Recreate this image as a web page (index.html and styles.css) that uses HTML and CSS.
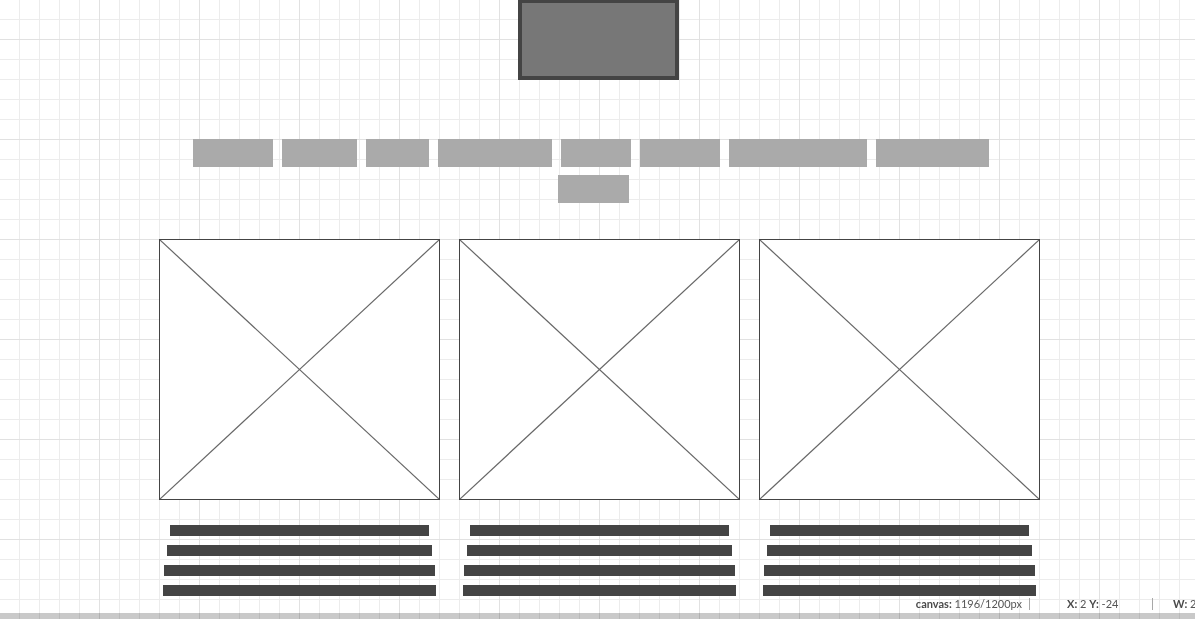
FILE: index.html
```html
<!DOCTYPE html>
<html lang="en">
<head>
<meta charset="utf-8">
<title>Wireframe</title>
<link rel="stylesheet" href="styles.css">
</head>
<body class="canvas">
  <header class="masthead">
    <div class="logo"></div>
  </header>

  <nav class="menu">
    <span class="menu-item w80"></span>
    <span class="menu-item w75"></span>
    <span class="menu-item w63"></span>
    <span class="menu-item w114"></span>
    <span class="menu-item w70"></span>
    <span class="menu-item w80"></span>
    <span class="menu-item w138"></span>
    <span class="menu-item w113"></span>
    <span class="menu-item w71 menu-item-last"></span>
  </nav>

  <main class="cards">
    <article class="card">
      <div class="thumb">
        <svg viewBox="0 0 279 259" preserveAspectRatio="none"><line x1="0" y1="0" x2="279" y2="259"/><line x1="279" y1="0" x2="0" y2="259"/></svg>
      </div>
      <div class="lines">
        <span class="line l1"></span>
        <span class="line l2"></span>
        <span class="line l3"></span>
        <span class="line l4"></span>
      </div>
    </article>
    <article class="card">
      <div class="thumb">
        <svg viewBox="0 0 279 259" preserveAspectRatio="none"><line x1="0" y1="0" x2="279" y2="259"/><line x1="279" y1="0" x2="0" y2="259"/></svg>
      </div>
      <div class="lines">
        <span class="line l1"></span>
        <span class="line l2"></span>
        <span class="line l3"></span>
        <span class="line l4"></span>
      </div>
    </article>
    <article class="card">
      <div class="thumb">
        <svg viewBox="0 0 279 259" preserveAspectRatio="none"><line x1="0" y1="0" x2="279" y2="259"/><line x1="279" y1="0" x2="0" y2="259"/></svg>
      </div>
      <div class="lines">
        <span class="line l1"></span>
        <span class="line l2"></span>
        <span class="line l3"></span>
        <span class="line l4"></span>
      </div>
    </article>
  </main>

  <footer class="status">
    <span class="seg seg-canvas"><b>canvas:</b> 1196/1200px</span>
    <span class="seg seg-pos"><b>X:</b> 2 <b>Y:</b> -24</span>
    <span class="seg seg-size"><b>W:</b> 281 <b>H:</b> 261</span>
  </footer>
  <div class="hscroll"></div>
</body>
</html>
```

FILE: styles.css
```css
html, body {
  margin: 0;
  padding: 0;
}

.canvas {
  min-height: 100vh;
  overflow: hidden;
  background-color: #ffffff;
  background-image:
    linear-gradient(90deg, transparent 99px, #e1e1e1 99px),
    linear-gradient(180deg, transparent 99px, #e1e1e1 99px),
    linear-gradient(90deg, transparent 19px, #ececec 19px),
    linear-gradient(180deg, transparent 19px, #ececec 19px);
  background-size: 100px 100px, 100px 100px, 20px 20px, 20px 20px;
  background-position: 0 0, 0 40px, 0 0, 0 0;
  font-family: Lato, "Liberation Sans", sans-serif;
}

.masthead {
  display: flex;
  justify-content: center;
  padding-left: 2px;
}

.logo {
  width: 161px;
  height: 81px;
  margin-top: -1px;
  box-sizing: border-box;
  border: 4px solid #444444;
  background: #777777;
}

.menu {
  width: 800px;
  margin: 59px 0 0 191px;
  display: flex;
  flex-wrap: wrap;
  justify-content: center;
  column-gap: 9px;
  row-gap: 8px;
}

.menu-item {
  display: block;
  height: 28px;
  background: #aaaaaa;
}

.menu-item-last {
  margin-left: 5px;
}

.w63 { width: 63px; }
.w70 { width: 70px; }
.w71 { width: 71px; }
.w75 { width: 75px; }
.w80 { width: 80px; }
.w113 { width: 113px; }
.w114 { width: 114px; }
.w138 { width: 138px; }

.cards {
  display: flex;
  justify-content: center;
  gap: 19px;
  padding-left: 4px;
  margin-top: 36px;
}

.card {
  width: 281px;
  display: flex;
  flex-direction: column;
  align-items: center;
}

.thumb {
  width: 281px;
  height: 261px;
  box-sizing: border-box;
  border: 1px solid #444444;
  background: #ffffff;
}

.thumb svg {
  display: block;
  width: 100%;
  height: 100%;
}

.thumb line {
  stroke: #666666;
  stroke-width: 1.2;
}

.lines {
  margin-top: 25px;
  display: flex;
  flex-direction: column;
  align-items: center;
  gap: 9px;
}

.line {
  display: block;
  height: 11px;
  background: #444444;
}

.l1 { width: 259px; }
.l2 { width: 265px; }
.l3 { width: 271px; }
.l4 { width: 273px; }

.status {
  position: fixed;
  left: 910px;
  right: 0;
  bottom: 9px;
  height: 12px;
  display: flex;
  overflow: hidden;
  font-family: Lato, "Liberation Sans", sans-serif;
  font-size: 11px;
  line-height: 12px;
  color: #555555;
  white-space: nowrap;
}

.status b {
  font-weight: 700;
  color: #4a4a4a;
}

.seg {
  display: block;
  box-sizing: border-box;
  height: 12px;
  flex: none;
}

.seg-canvas {
  width: 120px;
  padding-right: 7px;
  text-align: right;
  border-right: 1px solid #a8a8a8;
}

.seg-pos {
  width: 123px;
  padding-left: 37px;
  border-right: 1px solid #a8a8a8;
}

.seg-size {
  padding-left: 20px;
}

.hscroll {
  position: fixed;
  left: 0;
  right: 0;
  bottom: 0;
  height: 6px;
  background: rgba(0, 0, 0, 0.21);
}
```
